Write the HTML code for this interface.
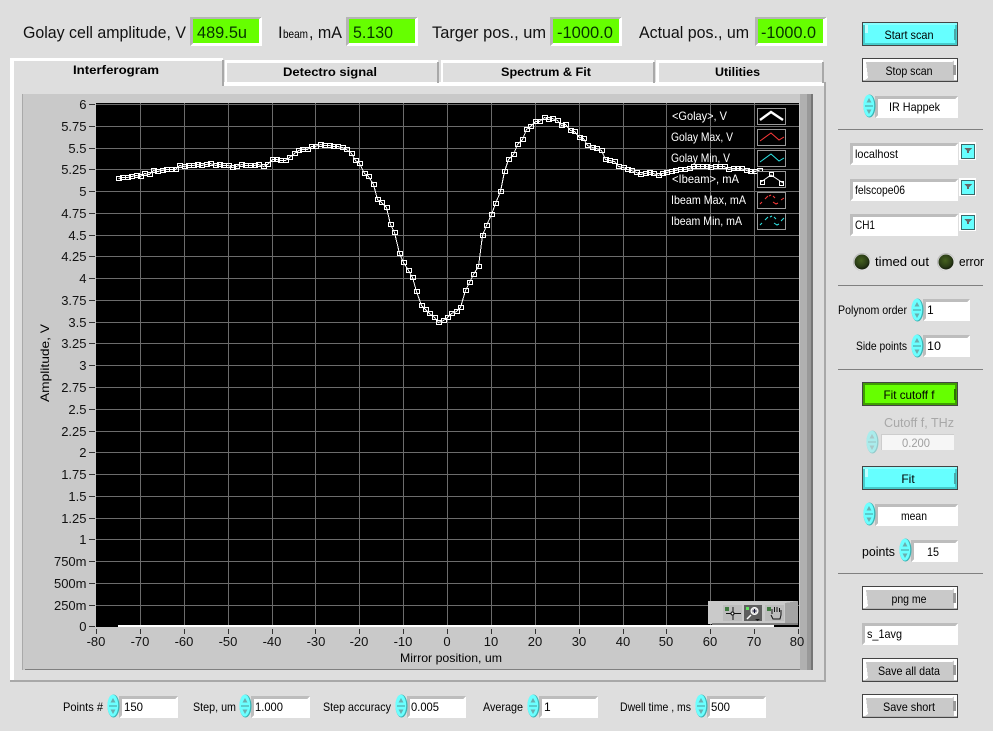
<!DOCTYPE html>
<html><head><meta charset="utf-8"><title>Interferogram</title>
<style>
html,body{margin:0;padding:0;background:#dedede;overflow:hidden;width:993px;height:731px}
svg{display:block;position:absolute;left:0;top:0}
text{font-family:"Liberation Sans",sans-serif;font-size:12px;fill:#000}
.big{font-size:16.5px;fill:#111}
.val{font-size:16.5px;fill:#063300}
.tab{font-weight:bold;font-size:12px}
.tk{font-size:13px;fill:#111}
.lg{font-size:12px;fill:#fff}
.m{text-anchor:middle}
.e{text-anchor:end}
.c{shape-rendering:crispEdges}
</style></head><body>
<svg width="993" height="731" viewBox="0 0 993 731" xmlns="http://www.w3.org/2000/svg">
<defs>
<marker id="mk" markerUnits="userSpaceOnUse" markerWidth="8" markerHeight="7" refX="3.5" refY="3.5" overflow="visible">
<rect x="1.5" y="1.5" width="5" height="4" fill="none" stroke="#fff" stroke-width="1" shape-rendering="geometricPrecision"/></marker>
<radialGradient id="led" cx=".45" cy=".4" r=".6"><stop offset="0" stop-color="#46621f"/><stop offset=".7" stop-color="#2a3c16"/><stop offset="1" stop-color="#141d0b"/></radialGradient>
<g id="sp">
<ellipse cx="6.5" cy="12" rx="6" ry="11.5" fill="#3cb4b4"/>
<ellipse cx="5.8" cy="11.6" rx="5.4" ry="11" fill="#6cffff"/>
<path d="M3.500 8.500L6 4 8.500 8.500z" fill="#6aafaf"/><path d="M3.500 15.500L6 20 8.500 15.500z" fill="#6aafaf"/>
<path d="M2 12h8" stroke="#4a9a9a" stroke-width="1"/>
</g>
<g id="spd" opacity=".45"><use href="#sp"/></g>
<g id="f83" class="c"><rect width="83" height="22" fill="#fff"/><path d="M0 22V0H83L80 3H3V19z" fill="#bdbdbd"/></g>
<g id="f59" class="c"><rect width="59" height="22" fill="#fff"/><path d="M0 22V0H59L56 3H3V19z" fill="#bdbdbd"/></g>
<g id="f47" class="c"><rect width="47" height="22" fill="#fff"/><path d="M0 22V0H47L44 3H3V19z" fill="#bdbdbd"/></g>
<g id="f108" class="c"><rect width="108" height="22" fill="#fff"/><path d="M0 22V0H108L105 3H3V19z" fill="#bdbdbd"/></g>
<g id="f96" class="c"><rect width="96" height="22" fill="#fff"/><path d="M0 22V0H96L93 3H3V19z" fill="#bdbdbd"/></g>
<g id="bg" class="c"><rect width="96" height="24" fill="#444"/><rect x="1" y="1" width="94" height="22" fill="#fff"/><path d="M4 4H90L92 2V22H3L6 20z" fill="#c9c9c9"/><path d="M91 7h3v10h-3z" fill="#9a9a9a"/><rect x="1" y="22" width="94" height="1" fill="#b5b5b5"/></g>
<g id="bc" class="c"><rect width="96" height="24" fill="#444"/><rect x="1" y="1" width="94" height="22" fill="#46cccc"/><rect x="3" y="3" width="90" height="18" fill="#66ffff"/><rect x="1" y="1" width="94" height="2" fill="#8affff"/><path d="M3 3h3v8H3z" fill="#bdffff"/><path d="M92 7h2v11h-2z" fill="#4aa8a8"/></g>
<g id="bn" class="c"><rect width="96" height="24" fill="#444"/><rect x="1" y="1" width="94" height="22" fill="#3f9f00"/><rect x="3" y="3" width="90" height="18" fill="#66ff00"/><path d="M92 7h2v11h-2z" fill="#2c7000"/></g>
<g id="cb" class="c"><rect width="17" height="18" x="-2" y="-2" fill="#fff"/><rect width="14" height="15" fill="#3a6a6a"/><rect x="1" y="1" width="12" height="13" fill="#66ffff"/><path d="M3 4h8L7 8z" fill="#666"/><rect x="6" y="6" width="2" height="3" fill="#666"/></g>
<g id="ld"><circle r="9" fill="#bcbcbc"/><circle cx=".5" cy=".5" r="8.5" fill="#eee" opacity=".7"/><circle r="7.500" fill="url(#led)"/></g>
</defs>

<rect width="993" height="731" fill="#dedede"/>

<!-- top indicators -->
<g class="c">
<rect x="190" y="17" width="72" height="29" fill="#fff"/><path d="M190 46V17H262L259 19H193V43z" fill="#b5b5b5"/><rect x="193" y="19" width="66" height="24" fill="#66ff00"/>
<rect x="346" y="17" width="72" height="29" fill="#fff"/><path d="M346 46V17H418L415 19H349V43z" fill="#b5b5b5"/><rect x="349" y="19" width="66" height="24" fill="#66ff00"/>
<rect x="550" y="17" width="72" height="29" fill="#fff"/><path d="M550 46V17H622L619 19H553V43z" fill="#b5b5b5"/><rect x="553" y="19" width="66" height="24" fill="#66ff00"/>
<rect x="755" y="17" width="72" height="29" fill="#fff"/><path d="M755 46V17H827L824 19H758V43z" fill="#b5b5b5"/><rect x="758" y="19" width="65" height="24" fill="#66ff00"/>
</g>
<text class="big" x="23" y="38" textLength="163" lengthAdjust="spacingAndGlyphs">Golay cell amplitude, V</text>
<text class="val" x="197" y="38" textLength="50" lengthAdjust="spacingAndGlyphs">489.5u</text>
<text class="big" x="278" y="38">I</text><text x="283" y="38" font-size="11" textLength="25" lengthAdjust="spacingAndGlyphs">beam</text>
<text class="big" x="309" y="38" textLength="33" lengthAdjust="spacingAndGlyphs">, mA</text>
<text class="val" x="353" y="38" textLength="40" lengthAdjust="spacingAndGlyphs">5.130</text>
<text class="big" x="432" y="38" textLength="114" lengthAdjust="spacingAndGlyphs">Targer pos., um</text>
<text class="val" x="557" y="38" textLength="56" lengthAdjust="spacingAndGlyphs">-1000.0</text>
<text class="big" x="639" y="38" textLength="110" lengthAdjust="spacingAndGlyphs">Actual pos., um</text>
<text class="val" x="761" y="38" textLength="55" lengthAdjust="spacingAndGlyphs">-1000.0</text>

<!-- tab panel -->
<g class="c">
<rect x="10" y="83" width="816" height="599" fill="#dedede"/>
<rect x="224" y="82" width="601" height="4" fill="#fff"/>
<rect x="824" y="82" width="2" height="599" fill="#a8a8a8"/>
<rect x="10" y="680" width="816" height="2" fill="#a8a8a8"/>
<rect x="10" y="58" width="4" height="622" fill="#fff"/>
<rect x="11" y="58" width="212" height="3" fill="#fff"/>
<rect x="222" y="60" width="2" height="26" fill="#a8a8a8"/>
<rect x="225" y="60" width="213" height="3" fill="#fff"/><rect x="225" y="60" width="2" height="24" fill="#fff"/><rect x="437" y="62" width="2" height="21" fill="#a8a8a8"/>
<rect x="441" y="60" width="213" height="3" fill="#fff"/><rect x="441" y="60" width="2" height="24" fill="#fff"/><rect x="653" y="62" width="2" height="21" fill="#a8a8a8"/>
<rect x="656" y="60" width="167" height="3" fill="#fff"/><rect x="656" y="60" width="3" height="24" fill="#fff"/><rect x="822" y="62" width="2" height="21" fill="#a8a8a8"/>
</g>
<text class="tab" x="73" y="74" textLength="86" lengthAdjust="spacingAndGlyphs">Interferogram</text>
<text class="tab" x="283" y="76" textLength="94" lengthAdjust="spacingAndGlyphs">Detectro signal</text>
<text class="tab" x="501" y="76" textLength="90" lengthAdjust="spacingAndGlyphs">Spectrum &amp; Fit</text>
<text class="tab" x="715" y="76" textLength="45" lengthAdjust="spacingAndGlyphs">Utilities</text>

<!-- graph panel -->
<g class="c">
<rect x="22" y="94" width="791" height="576" fill="#c9c9c9"/>
<rect x="22" y="94" width="1" height="576" fill="#a9a9a9"/>
<rect x="25" y="669" width="788" height="1" fill="#808080"/>
<rect x="800" y="94" width="7" height="576" fill="#b0b0b0"/>
<rect x="807" y="94" width="4" height="576" fill="#999"/>
<rect x="811" y="94" width="2" height="576" fill="#767676"/>
<rect x="96" y="103" width="703" height="524" fill="#000"/>
<path fill="none" stroke="#6c6c6c" stroke-width="1" d="M140.5 103V627M184.5 103V627M228.5 103V627M272.5 103V627M315.5 103V627M359.5 103V627M403.5 103V627M447.5 103V627M491.5 103V627M535.5 103V627M579.5 103V627M623.5 103V627M666.5 103V627M710.5 103V627M754.5 103V627M96 104.5H799M96 126.5H799M96 148.5H799M96 169.5H799M96 191.5H799M96 213.5H799M96 235.5H799M96 256.5H799M96 278.5H799M96 300.5H799M96 322.5H799M96 343.5H799M96 365.5H799M96 387.5H799M96 409.5H799M96 431.5H799M96 452.5H799M96 474.5H799M96 496.5H799M96 518.5H799M96 539.5H799M96 561.5H799M96 583.5H799M96 605.5H799"/>
<rect x="118" y="625" width="656" height="2" fill="#fff"/>
<path fill="none" stroke="#333" stroke-width="1" d="M89 104.5h6M89 126.5h6M89 148.5h6M89 169.5h6M89 191.5h6M89 213.5h6M89 235.5h6M89 256.5h6M89 278.5h6M89 300.5h6M89 322.5h6M89 343.5h6M89 365.5h6M89 387.5h6M89 409.5h6M89 431.5h6M89 452.5h6M89 474.5h6M89 496.5h6M89 518.5h6M89 539.5h6M89 561.5h6M89 583.5h6M89 605.5h6M89 626.5h6M96.5 629v5M140.5 629v5M184.5 629v5M228.5 629v5M272.5 629v5M315.5 629v5M359.5 629v5M403.5 629v5M447.5 629v5M491.5 629v5M535.5 629v5M579.5 629v5M623.5 629v5M666.5 629v5M710.5 629v5M754.5 629v5M798.5 629v5"/>
</g>
<!-- y ticks -->
<g class="tk e">
<text class="tk e" x="86.500" y="109">6</text><text class="tk e" x="86.500" y="131">5.75</text><text class="tk e" x="86.500" y="153">5.5</text><text class="tk e" x="86.500" y="174">5.25</text><text class="tk e" x="86.500" y="196">5</text><text class="tk e" x="86.500" y="218">4.75</text><text class="tk e" x="86.500" y="240">4.5</text><text class="tk e" x="86.500" y="261">4.25</text><text class="tk e" x="86.500" y="283">4</text><text class="tk e" x="86.500" y="305">3.75</text><text class="tk e" x="86.500" y="327">3.5</text><text class="tk e" x="86.500" y="348">3.25</text><text class="tk e" x="86.500" y="370">3</text><text class="tk e" x="86.500" y="392">2.75</text><text class="tk e" x="86.500" y="414">2.5</text><text class="tk e" x="86.500" y="436">2.25</text><text class="tk e" x="86.500" y="457">2</text><text class="tk e" x="86.500" y="479">1.75</text><text class="tk e" x="86.500" y="501">1.5</text><text class="tk e" x="86.500" y="523">1.25</text><text class="tk e" x="86.500" y="544">1</text><text class="tk e" x="86.500" y="566">750m</text><text class="tk e" x="86.500" y="588">500m</text><text class="tk e" x="86.500" y="610">250m</text><text class="tk e" x="86.500" y="631">0</text>
</g>
<text class="tk m" x="96" y="646">-80</text><text class="tk m" x="140" y="646">-70</text><text class="tk m" x="184" y="646">-60</text><text class="tk m" x="228" y="646">-50</text><text class="tk m" x="272" y="646">-40</text><text class="tk m" x="316" y="646">-30</text><text class="tk m" x="359" y="646">-20</text><text class="tk m" x="403" y="646">-10</text><text class="tk m" x="447" y="646">0</text><text class="tk m" x="491" y="646">10</text><text class="tk m" x="535" y="646">20</text><text class="tk m" x="579" y="646">30</text><text class="tk m" x="623" y="646">40</text><text class="tk m" x="666" y="646">50</text><text class="tk m" x="710" y="646">60</text><text class="tk m" x="754" y="646">70</text><text class="tk m" x="797" y="646">80</text>
<text x="400" y="662" textLength="102" lengthAdjust="spacingAndGlyphs" style="font-size:12px">Mirror position, um</text>
<text transform="translate(49,402) rotate(-90)" textLength="78" lengthAdjust="spacingAndGlyphs" style="font-size:12px">Amplitude, V</text>

<!-- trace -->
<polyline fill="none" stroke="#fff" stroke-width="1" marker-start="url(#mk)" marker-mid="url(#mk)" marker-end="url(#mk)" points="118.5,178.5 122.5,177.5 127.5,177.5 131.5,176.5 136.5,175.5 140.5,176.5 144.5,173.5 149.5,174.5 153.5,170.5 157.5,171.5 162.5,170.5 166.5,169.5 171.5,169.5 175.5,169.5 179.5,165.5 184.5,166.5 188.5,165.5 193.5,165.5 197.5,164.5 201.5,165.5 206.5,164.5 210.5,163.5 215.5,165.5 219.5,164.5 223.5,165.5 228.5,165.5 232.5,167.5 236.5,166.5 241.5,164.5 245.5,165.5 250.5,165.5 254.5,165.5 258.5,164.5 263.5,166.5 267.5,164.5 272.5,159.5 276.5,159.5 280.5,160.5 285.5,160.5 289.5,157.5 294.5,153.5 298.5,150.5 302.5,149.5 307.5,149.5 311.5,146.5 315.5,146.5 320.5,144.5 324.5,145.5 329.5,145.5 333.5,146.5 337.5,146.5 342.5,147.5 346.5,149.5 351.5,153.5 355.5,160.5 359.5,163.5 364.5,173.5 368.5,176.5 373.5,184.5 377.5,199.5 381.5,202.5 386.5,207.5 390.5,224.5 394.5,232.5 399.5,253.5 403.5,262.5 408.5,270.5 412.5,277.5 416.5,291.5 421.5,305.5 425.5,309.5 429.5,313.5 434.5,317.5 438.5,322.5 443.5,320.5 447.5,317.5 451.5,313.5 456.5,311.5 460.5,307.5 465.5,290.5 469.5,282.5 473.5,274.5 478.5,266.5 482.5,235.5 486.5,225.5 491.5,214.5 495.5,203.5 500.5,191.5 504.5,171.5 508.5,159.5 513.5,154.5 517.5,144.5 522.5,139.5 526.5,129.5 530.5,126.5 535.5,121.5 539.5,121.5 544.5,117.5 548.5,119.5 552.5,118.5 557.5,120.5 561.5,125.5 565.5,124.5 570.5,130.5 574.5,131.5 579.5,137.5 583.5,138.5 587.5,145.5 592.5,147.5 596.5,148.5 601.5,150.5 605.5,159.5 609.5,160.5 614.5,161.5 618.5,166.5 623.5,167.5 627.5,169.5 631.5,170.5 636.5,172.5 640.5,174.5 645.5,173.5 649.5,172.5 653.5,173.5 658.5,175.5 662.5,173.5 666.5,172.5 671.5,171.5 675.5,170.5 680.5,169.5 684.5,169.5 689.5,168.5 693.5,166.5 697.5,166.5 702.5,166.5 706.5,166.5 710.5,167.5 715.5,166.5 719.5,166.5 724.5,166.5 728.5,169.5 733.5,168.5 737.5,168.5 741.5,168.5 746.5,170.5 750.5,171.5 754.5,171.5 759.5,170.5" shape-rendering="crispEdges"/>

<!-- legend -->
<text class="lg" x="672" y="120" textLength="55" lengthAdjust="spacingAndGlyphs">&lt;Golay&gt;, V</text>
<text class="lg" x="671" y="141" textLength="62" lengthAdjust="spacingAndGlyphs">Golay Max, V</text>
<text class="lg" x="671" y="162" textLength="59" lengthAdjust="spacingAndGlyphs">Golay Min, V</text>
<text class="lg" x="672" y="183" textLength="67" lengthAdjust="spacingAndGlyphs">&lt;Ibeam&gt;, mA</text>
<text class="lg" x="671" y="204" textLength="75" lengthAdjust="spacingAndGlyphs">Ibeam Max, mA</text>
<text class="lg" x="671" y="225" textLength="71" lengthAdjust="spacingAndGlyphs">Ibeam Min, mA</text>
<g fill="#000" stroke="#9a9a9a" class="c">
<rect x="757.5" y="108.5" width="28" height="16"/><rect x="757.5" y="129.5" width="28" height="16"/><rect x="757.5" y="150.5" width="28" height="16"/><rect x="757.5" y="171.5" width="28" height="16"/><rect x="757.5" y="192.5" width="28" height="16"/><rect x="757.5" y="213.5" width="28" height="16"/>
</g>
<g fill="none">
<path d="M760 120L771 112 783 120" stroke="#fff" stroke-width="2.4"/>
<path d="M760 141L771 133 779 140 784 137" stroke="#ff3a3a"/>
<path d="M760 162L771 154 779 161 784 158" stroke="#2ee6e6"/>
<path d="M761 182L771 175 783 183" stroke="#fff"/><rect x="760.5" y="180.5" width="4" height="4" stroke="#fff"/><rect x="769.5" y="172.5" width="4" height="4" stroke="#fff"/><rect x="779.5" y="181.5" width="4" height="4" stroke="#fff"/>
<path d="M760 204L762 202M765 199L768 196M769 196L771 195M773 196L775 198M773 202L776 204 778 203M781 200L784 198" stroke="#ff3a3a"/>
<path d="M760 225L762 223M765 220L768 217M770 217L772 216M774 217L776 219M774 223L777 225 779 224M781 221L784 218" stroke="#2ee6e6"/>
</g>

<!-- toolbar -->
<g class="c">
<rect x="708" y="601" width="90" height="23" fill="#cacaca"/>
<rect x="712" y="623" width="86" height="2" fill="#808080"/>
<path d="M785 603L798 601V623H785z" fill="#a4a4a4"/>
<rect x="723" y="605" width="19" height="16" fill="#bdbdbd"/>
<rect x="744" y="605" width="18" height="16" fill="#5e5e5e"/>
<rect x="765" y="605" width="19" height="16" fill="#bdbdbd"/>
<rect x="725" y="607" width="4" height="4" fill="#3f7a3f"/>
<rect x="746" y="607" width="3" height="3" fill="#5fe35f"/>
<rect x="767" y="607" width="4" height="4" fill="#3f7a3f"/>
</g>
<path d="M733 607V620M726 613.5H741" stroke="#111" fill="none"/><circle cx="732.5" cy="613.5" r="1.5" fill="#fff" stroke="#111"/>
<circle cx="754.5" cy="611" r="3.5" fill="#cfcfcf" stroke="#fff"/><path d="M752.500 611h4M754.500 609v4" stroke="#113"/><path d="M751 615L747 619" stroke="#fff" stroke-width="1.500"/><path d="M755 619h5l-2.500 2z" fill="#111"/>
<path d="M771 615l2 4h7l1-4v-5M772 614v-5M774.500 612v-5M777 612v-5M779.500 612v-4" stroke="#111" fill="none"/>

<!-- right column -->
<use href="#bc" x="862" y="22"/><text class="m" x="909" y="39" textLength="49" lengthAdjust="spacingAndGlyphs">Start scan</text>
<use href="#bg" x="862" y="58"/><text class="m" x="909" y="75" textLength="47" lengthAdjust="spacingAndGlyphs">Stop scan</text>
<use href="#f83" x="875" y="96"/><use href="#sp" x="863" y="94"/>
<text x="889" y="111" textLength="51" lengthAdjust="spacingAndGlyphs">IR Happek</text>
<rect x="838" y="129" width="145" height="1" fill="#808080" class="c"/>
<use href="#f108" x="850" y="143"/><use href="#cb" x="961" y="144"/><text x="855" y="158" textLength="43" lengthAdjust="spacingAndGlyphs">localhost</text>
<use href="#f108" x="850" y="179"/><use href="#cb" x="961" y="180"/><text x="855" y="194" textLength="50" lengthAdjust="spacingAndGlyphs">felscope06</text>
<use href="#f108" x="850" y="214"/><use href="#cb" x="961" y="215"/><text x="855" y="229" textLength="20" lengthAdjust="spacingAndGlyphs">CH1</text>
<use href="#ld" x="862" y="262"/><text x="875" y="266" font-size="13" style="font-size:13px" textLength="54" lengthAdjust="spacingAndGlyphs">timed out</text>
<use href="#ld" x="946" y="262"/><text x="959" y="266" style="font-size:13px" textLength="25" lengthAdjust="spacingAndGlyphs">error</text>
<rect x="838" y="285" width="145" height="1" fill="#808080" class="c"/>
<text x="838" y="314" textLength="69" lengthAdjust="spacingAndGlyphs">Polynom order</text>
<use href="#f47" x="923" y="299"/><use href="#sp" x="911" y="298"/><text x="927" y="314">1</text>
<text x="856" y="350" textLength="51" lengthAdjust="spacingAndGlyphs">Side points</text>
<use href="#f47" x="923" y="335"/><use href="#sp" x="911" y="334"/><text x="927" y="350" textLength="14" lengthAdjust="spacingAndGlyphs">10</text>
<rect x="838" y="369" width="145" height="1" fill="#808080" class="c"/>
<use href="#bn" x="862" y="382"/><text class="m" x="909" y="399" textLength="51" lengthAdjust="spacingAndGlyphs">Fit cutoff f</text>
<text x="884" y="427" style="font-size:13px;fill:#a8a8a8" textLength="70" lengthAdjust="spacingAndGlyphs">Cutoff f, THz</text>
<rect x="881" y="434" width="73" height="16" fill="#f6f6f6"/><path d="M881.500 450V434.500H954" fill="none" stroke="#cdcdcd"/>
<use href="#spd" x="866" y="430"/><text class="m" x="916" y="447" style="fill:#a0a0a0" textLength="28" lengthAdjust="spacingAndGlyphs">0.200</text>
<use href="#bc" x="862" y="466"/><text class="m" x="908" y="483">Fit</text>
<use href="#f83" x="875" y="504"/><use href="#sp" x="863" y="502"/><text class="m" x="914" y="520" textLength="26" lengthAdjust="spacingAndGlyphs">mean</text>
<text x="862" y="556" style="font-size:13px" textLength="33" lengthAdjust="spacingAndGlyphs">points</text>
<use href="#f47" x="911" y="540"/><use href="#sp" x="899" y="538"/><text class="m" x="933" y="556" textLength="12" lengthAdjust="spacingAndGlyphs">15</text>
<rect x="838" y="573" width="145" height="1" fill="#808080" class="c"/>
<use href="#bg" x="862" y="586"/><text class="m" x="909" y="603" textLength="35" lengthAdjust="spacingAndGlyphs">png me</text>
<use href="#f96" x="862" y="623"/><text x="867" y="638" textLength="35" lengthAdjust="spacingAndGlyphs">s_1avg</text>
<use href="#bg" x="862" y="658"/><text class="m" x="909" y="675" textLength="62" lengthAdjust="spacingAndGlyphs">Save all data</text>
<use href="#bg" x="862" y="694"/><text class="m" x="909" y="711" textLength="52" lengthAdjust="spacingAndGlyphs">Save short</text>

<!-- bottom row -->
<text x="63" y="711" textLength="40" lengthAdjust="spacingAndGlyphs">Points #</text>
<use href="#f59" x="119" y="696"/><use href="#sp" x="107" y="694"/><text x="124" y="711" textLength="19" lengthAdjust="spacingAndGlyphs">150</text>
<text x="193" y="711" textLength="43" lengthAdjust="spacingAndGlyphs">Step, um</text>
<use href="#f59" x="251" y="696"/><use href="#sp" x="239" y="694"/><text x="255" y="711" textLength="28" lengthAdjust="spacingAndGlyphs">1.000</text>
<text x="323" y="711" textLength="68" lengthAdjust="spacingAndGlyphs">Step accuracy</text>
<use href="#f59" x="407" y="696"/><use href="#sp" x="395" y="694"/><text x="411" y="711" textLength="28" lengthAdjust="spacingAndGlyphs">0.005</text>
<text x="483" y="711" textLength="40" lengthAdjust="spacingAndGlyphs">Average</text>
<use href="#f59" x="539" y="696"/><use href="#sp" x="527" y="694"/><text x="544" y="711">1</text>
<text x="620" y="711" textLength="71" lengthAdjust="spacingAndGlyphs">Dwell time , ms</text>
<use href="#f59" x="707" y="696"/><use href="#sp" x="695" y="694"/><text x="711" y="711" textLength="19" lengthAdjust="spacingAndGlyphs">500</text>
</svg>
</body></html>
